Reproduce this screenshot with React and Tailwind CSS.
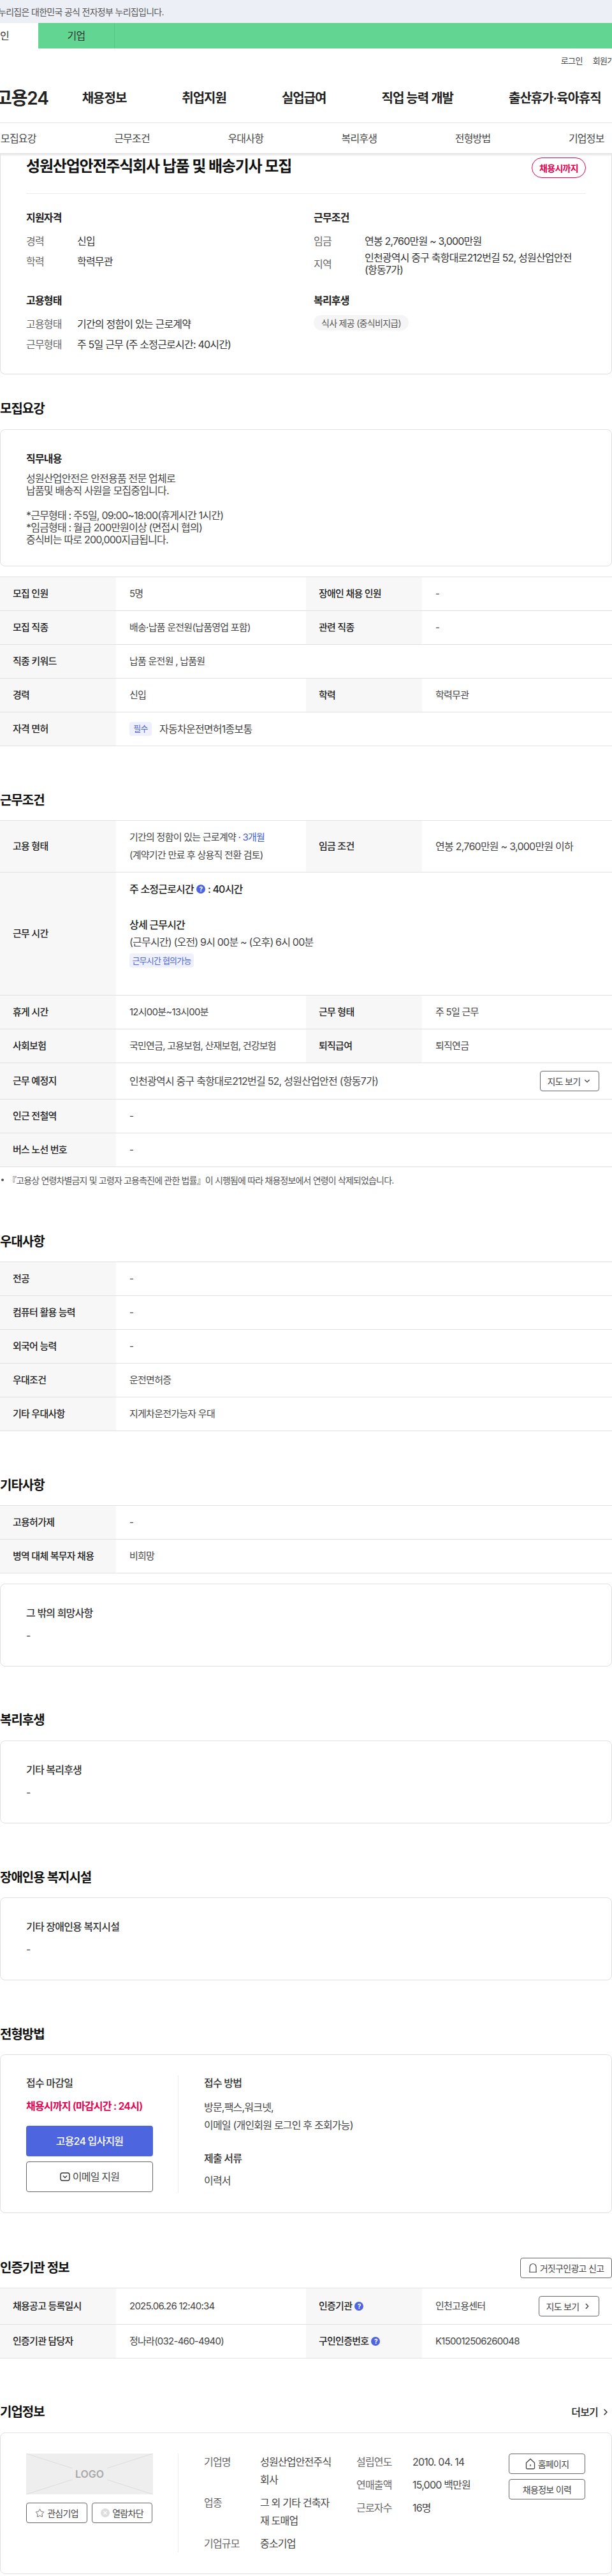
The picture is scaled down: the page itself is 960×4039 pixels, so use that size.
import React from 'react';
import { ChevronDown, ChevronRight, Star } from 'lucide-react';

const Heading = ({ children, className = '' }) => (
  <h2 className={`h-[30px] text-[20px] leading-[30px] font-semibold tracking-[-0.05em] text-[#111] whitespace-nowrap ${className}`}>
    {children}
  </h2>
);

const Label = ({ children, className = 'w-[182px]' }) => (
  <div className={`${className} shrink-0 flex items-center gap-1 bg-[#f7f7f7] pl-5 text-[15px] font-medium tracking-[-0.05em] text-[#222]`}>
    {children}
  </div>
);

const Value = ({ children, className = 'w-[298px]' }) => (
  <div className={`${className} shrink-0 flex items-center pl-[21px] text-[15px] tracking-[-0.05em] text-[#444]`}>
    {children}
  </div>
);

const Row = ({ children, className = 'h-[53px]' }) => (
  <div className={`flex border-b border-[#e0e0e0] ${className}`}>{children}</div>
);

const Help = () => (
  <span className="inline-flex h-[14px] w-[14px] items-center justify-center rounded-full bg-[#4e65e0] text-[10px] leading-none font-bold text-white">
    ?
  </span>
);

const InfoCard = ({ title, text = '-' }) => (
  <div className="h-[130px] rounded-lg border border-[#e0e0e0] px-10 pt-[33px]">
    <div className="h-6 text-[16px] leading-6 font-medium tracking-[-0.05em] text-[#333]">{title}</div>
    <div className="mt-[11px] h-6 text-[16px] leading-6 text-[#444]">{text}</div>
  </div>
);

const KeyValue = ({ k, children, className = '' }) => (
  <div className={`flex h-6 items-center text-[16px] leading-6 tracking-[-0.05em] ${className}`}>
    <span className="w-20 shrink-0 text-[#666]">{k}</span>
    <span className="text-[#333]">{children}</span>
  </div>
);

const SmallTitle = ({ children }) => (
  <div className="h-6 text-[16px] leading-6 font-semibold tracking-[-0.05em] text-[#222]">{children}</div>
);

const Outline = ({ children, className = '' }) => (
  <button className={`flex h-8 items-center justify-center gap-1 rounded border border-[#666] bg-white text-[14px] tracking-[-0.05em] text-[#444] whitespace-nowrap ${className}`}>
    {children}
  </button>
);

const HouseIcon = () => (
  <svg width="16" height="18" viewBox="0 0 16 18" fill="none" stroke="#444" strokeWidth="1.3">
    <path d="M1.5 7.5 8 1.5l6.5 6v8a1.5 1.5 0 0 1-1.5 1.5H3a1.5 1.5 0 0 1-1.5-1.5z" />
    <path d="M8 10v3" />
  </svg>
);

export default function App() {
  return (
    <div className="h-[4039px] w-[960px] overflow-hidden bg-white font-['Inter','Noto_Sans_CJK_KR',sans-serif] text-[#333]">
      {/* 상단 배너 */}
      <div className="flex h-9 items-center bg-[#eceff5] text-[14px] tracking-[-0.05em] text-[#555]">
        <span className="-ml-[3px] whitespace-nowrap">누리집은 대한민국 공식 전자정부 누리집입니다.</span>
      </div>

      <div className="flex h-10 bg-[#62d592] text-[16px] tracking-[-0.05em] text-[#333]">
        <div className="flex w-[60px] items-center bg-white">
          <span>인</span>
        </div>
        <div className="flex w-[120px] items-center justify-center border-r border-[#57c785]">기업</div>
      </div>

      <div className="flex h-10 items-center justify-end gap-4 text-[13px] tracking-[-0.05em] text-[#444]">
        <span className="whitespace-nowrap">로그인</span>
        <span className="-mr-[15px] whitespace-nowrap">회원가입</span>
      </div>

      {/* 메인 메뉴 */}
      <nav className="flex h-[76px] items-center gap-[87px] text-[20px] font-semibold tracking-[-0.05em] text-[#222] whitespace-nowrap">
        <div className="mr-[-34px] -ml-[7px] text-[28px] font-semibold tracking-[-0.04em]">고용24</div>
        <span>채용정보</span>
        <span>취업지원</span>
        <span>실업급여</span>
        <span>직업 능력 개발</span>
        <span>출산휴가·육아휴직</span>
      </nav>

      <div className="flex h-[49px] items-center border-y border-[#e4e4e4] pl-px text-[16px] tracking-[-0.05em] text-[#444] shadow-[0_2px_3px_rgba(0,0,0,0.12)]">
        {['모집요강', '근무조건', '우대사항', '복리후생', '전형방법', '기업정보'].map((item) => (
          <span key={item} className="w-[178.2px] shrink-0">{item}</span>
        ))}
      </div>

      {/* 공고 요약 */}
      <section className="rounded-b-lg border-x border-b border-[#e0e0e0] px-10 pb-[34px]">
        <div className="flex items-start justify-between border-b border-[#ececec] pt-1.5 pb-6">
          <h1 className="h-8 text-[24px] leading-7 font-semibold tracking-[-0.05em] text-[#111]">
            성원산업안전주식회사 납품 및 배송기사 모집
          </h1>
          <span className="flex h-8 w-[85px] items-center justify-center rounded-full border border-[#e6004d] text-[14px] font-semibold tracking-[-0.05em] text-[#e6004d]">
            채용시까지
          </span>
        </div>
        <div className="grid grid-cols-[451px_1fr] pt-[25px]">
          <div className="h-[130px]">
            <SmallTitle>지원자격</SmallTitle>
            <KeyValue k="경력" className="mt-[13px]">신입</KeyValue>
            <KeyValue k="학력" className="mt-2">학력무관</KeyValue>
          </div>
          <div className="h-[130px]">
            <SmallTitle>근무조건</SmallTitle>
            <KeyValue k="임금" className="mt-[13px]">연봉 2,760만원 ~ 3,000만원</KeyValue>
            <div className="mt-[5px] flex items-center text-[16px] leading-[19px] tracking-[-0.05em]">
              <span className="w-20 shrink-0 text-[#666]">지역</span>
              <span className="text-[#333]">인천광역시 중구 축항대로212번길 52, 성원산업안전<br />(항동7가)</span>
            </div>
          </div>
          <div>
            <SmallTitle>고용형태</SmallTitle>
            <KeyValue k="고용형태" className="mt-[13px]">기간의 정함이 있는 근로계약</KeyValue>
            <KeyValue k="근무형태" className="mt-2">주 5일 근무 (주 소정근로시간: 40시간)</KeyValue>
          </div>
          <div>
            <SmallTitle>복리후생</SmallTitle>
            <span className="mt-[11px] inline-flex h-6 items-center rounded-full bg-[#f5f5f5] px-3 text-[14px] tracking-[-0.05em] text-[#555]">
              식사 제공 (중식비지급)
            </span>
          </div>
        </div>
      </section>

      {/* 모집요강 */}
      <Heading className="mt-[39px]">모집요강</Heading>
      <div className="mt-[17px] rounded-lg border border-[#e0e0e0] px-10 pt-[33px] pb-[31px]">
        <SmallTitle>직무내용</SmallTitle>
        <p className="mt-[10px] text-[16px] leading-[19.2px] tracking-[-0.05em] text-[#444]">
          성원산업안전은 안전용품 전문 업체로<br />
          납품및 배송직 사원을 모집중입니다.<br />
          <br />
          *근무형태 : 주5일, 09:00~18:00(휴게시간 1시간)<br />
          *임금형태 : 월급 200만원이상 (면접시 협의)<br />
          중식비는 따로 200,000지급됩니다.
        </p>
      </div>
      <div className="mt-4 border-t border-[#e0e0e0]">
        <Row>
          <Label>모집 인원</Label>
          <Value>5명</Value>
          <Label>장애인 채용 인원</Label>
          <Value>-</Value>
        </Row>
        <Row>
          <Label>모집 직종</Label>
          <Value>배송·납품 운전원(납품영업 포함)</Value>
          <Label>관련 직종</Label>
          <Value>-</Value>
        </Row>
        <Row>
          <Label>직종 키워드</Label>
          <Value>납품 운전원 , 납품원</Value>
        </Row>
        <Row>
          <Label>경력</Label>
          <Value>신입</Value>
          <Label>학력</Label>
          <Value>학력무관</Value>
        </Row>
        <Row>
          <Label>자격 면허</Label>
          <Value className="w-[600px]">
            <span className="mr-3 inline-flex h-[22px] w-[35px] items-center justify-center rounded bg-[#eef1fd] text-[13px] text-[#4e65e0]">필수</span>
            <span className="text-[16px]">자동차운전면허1종보통</span>
          </Value>
        </Row>
      </div>

      {/* 근무조건 */}
      <Heading className="mt-[70px]">근무조건</Heading>
      <div className="mt-4 border-t border-[#e0e0e0]">
        <Row className="h-[81px]">
          <Label>고용 형태</Label>
          <Value>
            <div className="leading-7">
              <div>기간의 정함이 있는 근로계약 <span className="text-[#3f5be0]">· 3개월</span></div>
              <div>(계약기간 만료 후 상용직 전환 검토)</div>
            </div>
          </Value>
          <Label>임금 조건</Label>
          <Value><span className="text-[16px]">연봉 2,760만원 ~ 3,000만원 이하</span></Value>
        </Row>
        <Row className="h-[193px]">
          <Label>근무 시간</Label>
          <div className="pt-[14px] pl-[21px] text-[16px] leading-6 tracking-[-0.05em] text-[#444]">
            <div className="flex items-center gap-1 font-medium text-[#222]">주 소정근로시간 <Help />: 40시간</div>
            <div className="mt-8 font-medium text-[#222]">상세 근무시간</div>
            <div className="mt-[3px]">(근무시간) (오전) 9시 00분 ~ (오후) 6시 00분</div>
            <span className="mt-1.5 flex h-[22px] w-[101px] items-center justify-center rounded bg-[#eef1fd] text-[13px] text-[#4e65e0]">근무시간 협의가능</span>
          </div>
        </Row>
        <Row>
          <Label>휴게 시간</Label>
          <Value>12시00분~13시00분</Value>
          <Label>근무 형태</Label>
          <Value>주 5일 근무</Value>
        </Row>
        <Row>
          <Label>사회보험</Label>
          <Value>국민연금, 고용보험, 산재보험, 건강보험</Value>
          <Label>퇴직급여</Label>
          <Value>퇴직연금</Value>
        </Row>
        <Row className="h-[57px]">
          <Label>근무 예정지</Label>
          <Value className="w-[665px]"><span className="text-[16px]">인천광역시 중구 축항대로212번길 52, 성원산업안전 (항동7가)</span></Value>
          <div className="flex items-center">
            <Outline className="w-[93px] gap-0.5">지도 보기 <ChevronDown size={14} /></Outline>
          </div>
        </Row>
        <Row>
          <Label>인근 전철역</Label>
          <Value>-</Value>
        </Row>
        <Row>
          <Label>버스 노선 번호</Label>
          <Value>-</Value>
        </Row>
      </div>
      <p className="mt-[10px] flex h-5 items-center pl-[2px] text-[14px] tracking-[-0.06em] text-[#555]">
        <span className="mr-1.5 h-1 w-1 rounded-full bg-[#555]" />
        『고용상 연령차별금지 및 고령자 고용촉진에 관한 법률』이 시행됨에 따라 채용정보에서 연령이 삭제되었습니다.
      </p>

      {/* 우대사항 */}
      <Heading className="mt-[72px]">우대사항</Heading>
      <div className="mt-4 border-t border-[#e0e0e0]">
        <Row><Label>전공</Label><Value>-</Value></Row>
        <Row><Label>컴퓨터 활용 능력</Label><Value>-</Value></Row>
        <Row><Label>외국어 능력</Label><Value>-</Value></Row>
        <Row><Label>우대조건</Label><Value>운전면허증</Value></Row>
        <Row><Label>기타 우대사항</Label><Value>지게차운전가능자 우대</Value></Row>
      </div>

      {/* 기타사항 */}
      <Heading className="mt-[70px]">기타사항</Heading>
      <div className="mt-4 border-t border-[#e0e0e0]">
        <Row><Label>고용허가제</Label><Value>-</Value></Row>
        <Row><Label>병역 대체 복무자 채용</Label><Value>비희망</Value></Row>
      </div>
      <div className="mt-4">
        <InfoCard title="그 밖의 희망사항" />
      </div>

      {/* 복리후생 */}
      <Heading className="mt-[69px]">복리후생</Heading>
      <div className="mt-[17px]">
        <InfoCard title="기타 복리후생" />
      </div>

      <Heading className="mt-[70px]">장애인용 복지시설</Heading>
      <div className="mt-4">
        <InfoCard title="기타 장애인용 복지시설" />
      </div>

      {/* 전형방법 */}
      <Heading className="mt-[70px]">전형방법</Heading>
      <div className="mt-4 flex h-[249px] rounded-lg border border-[#e0e0e0] pt-8 pl-10">
        <div className="h-[184px] w-[239px] border-r border-[#ececec] pr-10">
          <div className="h-6 text-[16px] leading-6 font-medium tracking-[-0.05em] text-[#333]">접수 마감일</div>
          <div className="mt-3 h-6 text-[16px] leading-6 font-semibold tracking-[-0.05em] text-[#e6004d]">채용시까지 (마감시간 : 24시)</div>
          <button className="mt-[19px] h-12 w-[199px] rounded bg-[#4e65e0] text-[16px] font-medium tracking-[-0.05em] text-white">고용24 입사지원</button>
          <button className="mt-2 flex h-12 w-[199px] items-center justify-center gap-1 rounded border border-[#666] text-[16px] tracking-[-0.05em] text-[#444]">
            <svg width="16" height="14" viewBox="0 0 16 14" fill="none" stroke="#333" strokeWidth="1.4">
              <rect x="1" y="1" width="14" height="12" rx="3" />
              <path d="M5 5.5 8 8.5l3-3" />
            </svg>
            이메일 지원
          </button>
        </div>
        <div className="pl-10 text-[16px] tracking-[-0.05em] text-[#444]">
          <div className="h-6 leading-6 font-medium text-[#333]">접수 방법</div>
          <div className="mt-3 leading-7">방문,팩스,워크넷,<br />이메일 (개인회원 로그인 후 조회가능)</div>
          <div className="mt-[26px] h-6 leading-6 font-medium text-[#333]">제출 서류</div>
          <div className="mt-[11px] h-6 leading-6">이력서</div>
        </div>
      </div>

      {/* 인증기관 정보 */}
      <div className="mt-[71px] flex h-[30px] items-center justify-between">
        <Heading>인증기관 정보</Heading>
        <Outline className="w-[144px] shrink-0">
          <svg width="14" height="16" viewBox="0 0 14 16" fill="none" stroke="#444" strokeWidth="1.2">
            <path d="M2 14.5V6.5a5 5 0 0 1 10 0v8zM1 14.5h12" />
          </svg>
          거짓구인광고 신고
        </Outline>
      </div>
      <div className="mt-4 border-t border-[#e0e0e0]">
        <Row className="h-[57px]">
          <Label>채용공고 등록일시</Label>
          <Value>2025.06.26 12:40:34</Value>
          <Label>인증기관 <Help /></Label>
          <Value className="w-[183px]">인천고용센터</Value>
          <div className="flex items-center">
            <Outline className="w-[95px] gap-1.5">지도 보기 <ChevronRight size={14} strokeWidth={2.5} /></Outline>
          </div>
        </Row>
        <Row>
          <Label>인증기관 담당자</Label>
          <Value>정나라(032-460-4940)</Value>
          <Label>구인인증번호 <Help /></Label>
          <Value>K150012506260048</Value>
        </Row>
      </div>

      {/* 기업정보 */}
      <div className="mt-[69px] flex h-[30px] items-center justify-between pr-[2px]">
        <Heading>기업정보</Heading>
        <span className="flex items-center gap-1 text-[16px] font-medium tracking-[-0.05em] text-[#222]">
          더보기 <ChevronRight size={16} />
        </span>
      </div>
      <div className="mt-[17px] flex h-[222px] rounded-lg border border-[#e0e0e0] pt-8 pl-10 text-[16px] tracking-[-0.05em]">
        <div className="h-[155px] w-[239px] border-r border-[#ececec] pr-10">
          <div className="relative flex h-16 w-[199px] items-center justify-center bg-[#eeeeee]">
            <svg className="absolute inset-0" width="199" height="64" viewBox="0 0 199 64" stroke="#dcdcdc">
              <path d="M0 0 72 23M199 0l-72 23M0 64l72-23M199 64l-72-23" />
            </svg>
            <span className="text-[16px] font-semibold tracking-normal text-[#a9a9a9]">LOGO</span>
          </div>
          <div className="mt-[13px] flex justify-between">
            <Outline className="w-[96px]"><Star size={15} strokeWidth={1.3} /> 관심기업</Outline>
            <Outline className="w-[95px]">
              <svg width="14" height="14" viewBox="0 0 14 14" stroke="white" strokeWidth="1.2">
                <circle cx="7" cy="7" r="7" fill="#dddddd" stroke="none" />
                <path d="m4.5 4.5 5 5m0-5-5 5" />
              </svg>
              열람차단
            </Outline>
          </div>
        </div>
        <div className="-mt-px flex w-[279px] shrink-0 flex-col gap-2 pl-10 leading-7">
          <div className="flex"><span className="w-[88px] shrink-0 text-[#666]">기업명</span><span className="w-[120px] text-[#444]">성원산업안전주식회사</span></div>
          <div className="flex"><span className="w-[88px] shrink-0 text-[#666]">업종</span><span className="w-[120px] text-[#444]">그 외 기타 건축자재 도매업</span></div>
          <div className="flex"><span className="w-[88px] shrink-0 text-[#666]">기업규모</span><span className="text-[#444]">중소기업</span></div>
        </div>
        <div className="-mt-px flex w-[239px] shrink-0 flex-col gap-2 leading-7">
          <div className="flex"><span className="w-[88px] shrink-0 text-[#666]">설립연도</span><span className="text-[#444]">2010. 04. 14</span></div>
          <div className="flex"><span className="w-[88px] shrink-0 text-[#666]">연매출액</span><span className="text-[#444]">15,000 백만원</span></div>
          <div className="flex"><span className="w-[88px] shrink-0 text-[#666]">근로자수</span><span className="text-[#444]">16명</span></div>
        </div>
        <div className="flex flex-col gap-2">
          <Outline className="w-[120px]"><HouseIcon /> 홈페이지</Outline>
          <Outline className="w-[120px]">채용정보 이력</Outline>
        </div>
      </div>
    </div>
  );
}
